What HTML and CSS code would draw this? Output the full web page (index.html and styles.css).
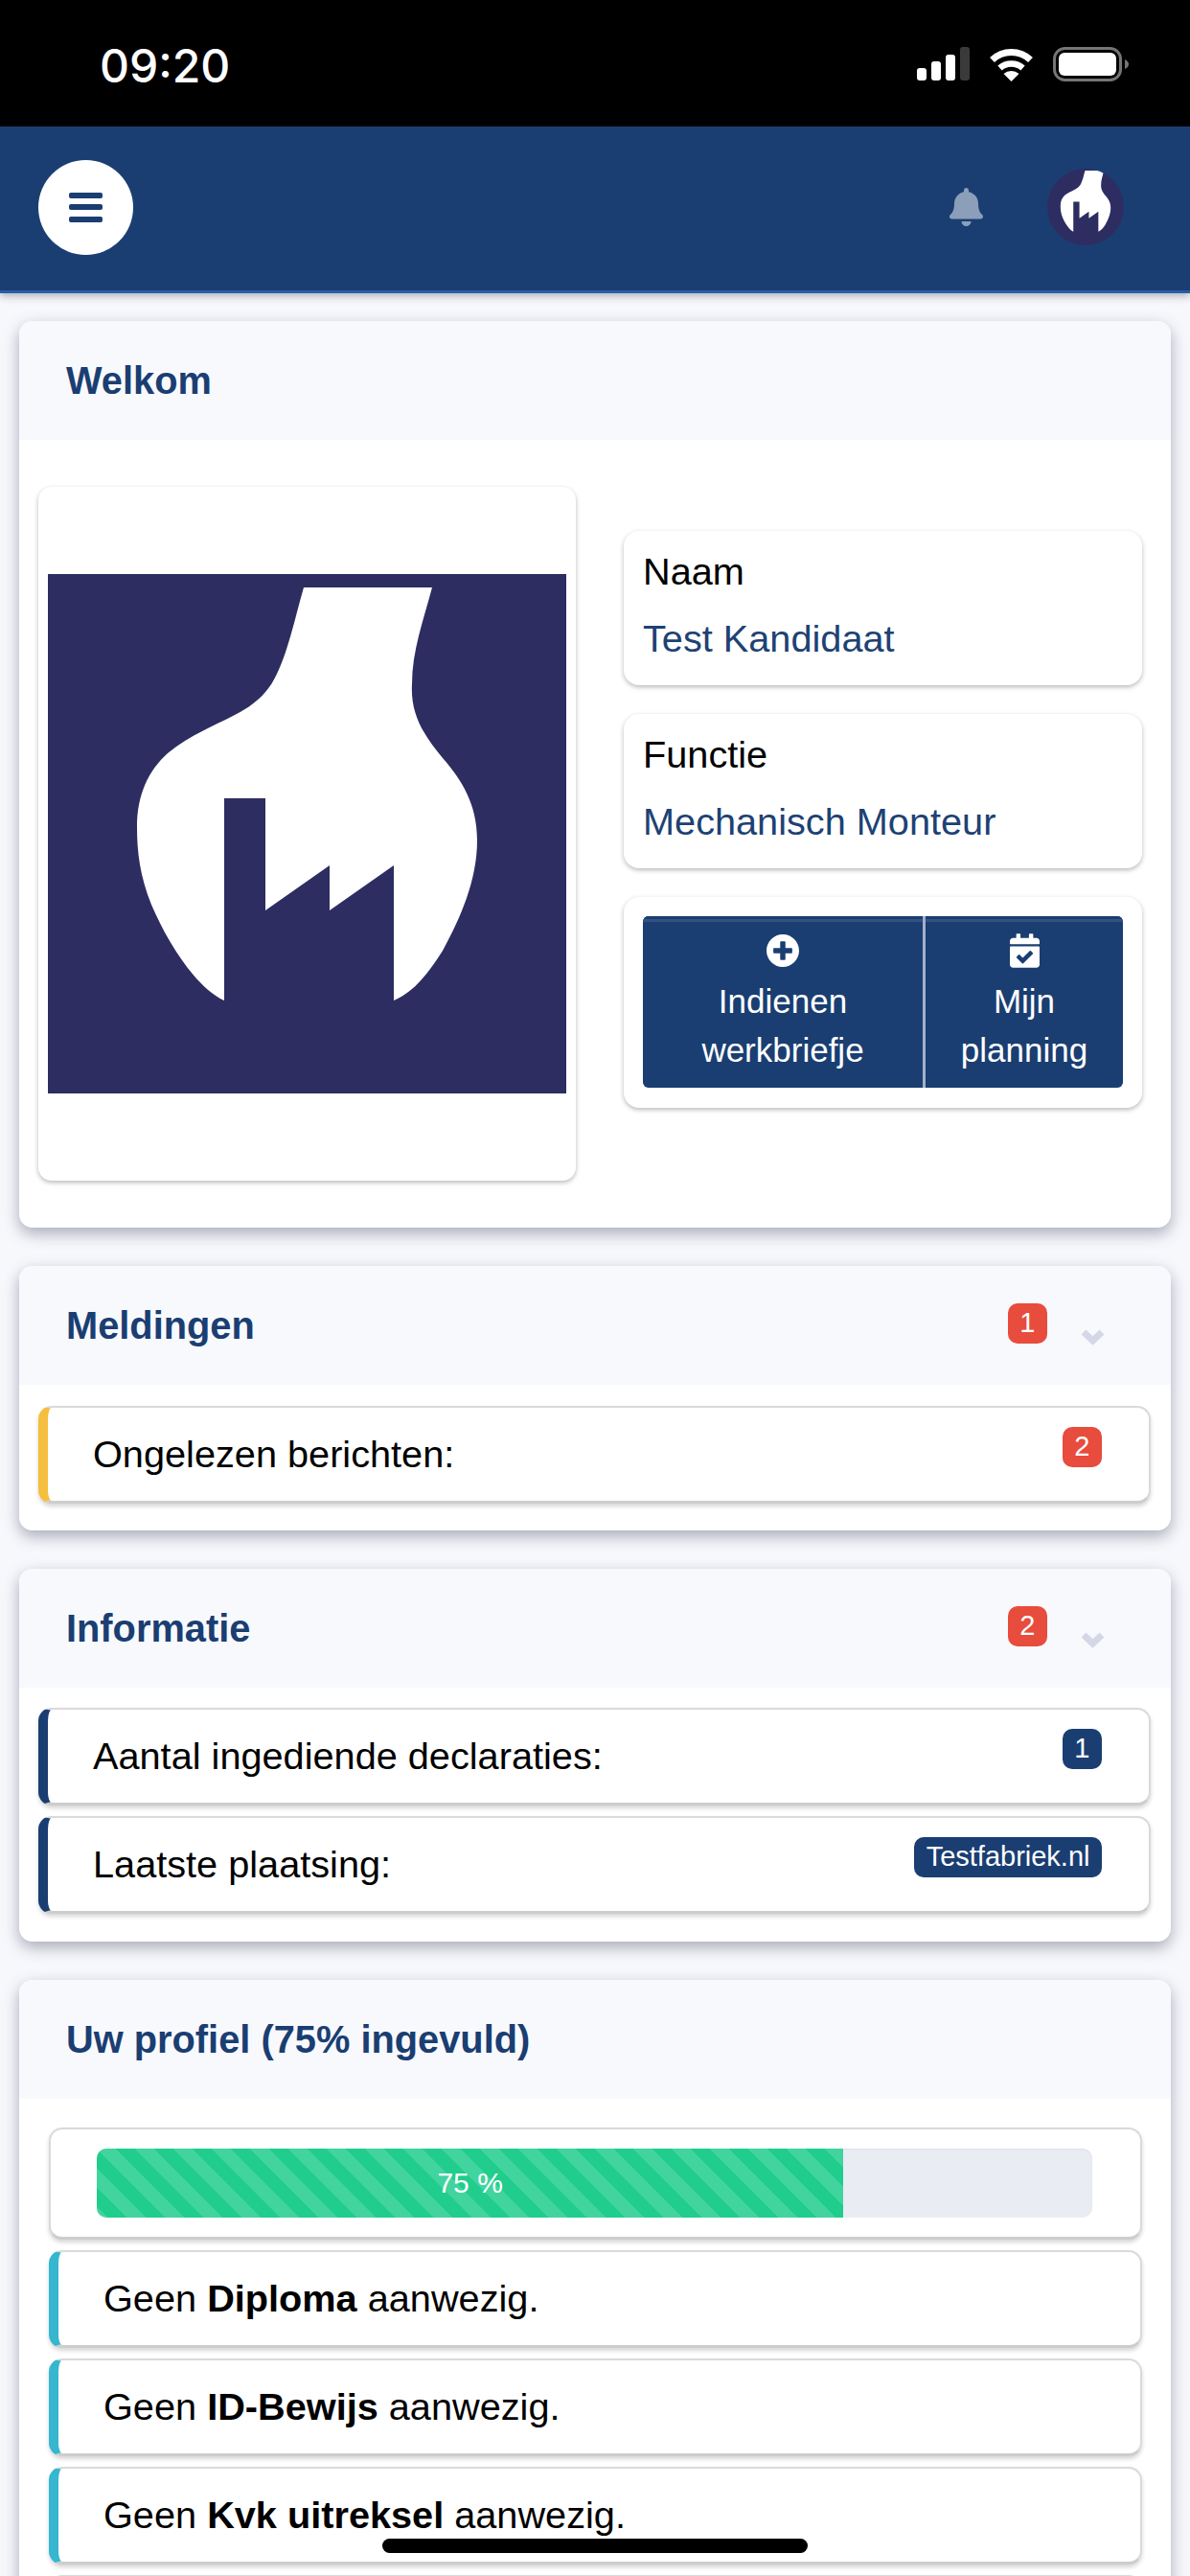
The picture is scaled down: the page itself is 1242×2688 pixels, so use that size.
FILE: index.html
```html
<!DOCTYPE html>
<html lang="nl">
<head>
    <meta charset="UTF-8">
    <meta name="viewport" content="width=device-width, initial-scale=1.0">
    <title>Welkom</title>
    <link rel="stylesheet" href="styles.css">
</head>
<body>

    <svg class="defs" width="0" height="0">
        <symbol id="logo" viewBox="0 0 541 542">
            <rect width="541" height="542" fill="#2e2d62"/>
            <path fill="#fff" d="M267 14H401C392 48 380 80 380 115C378 150 396 172 412 192C432 215 448 240 448 278C448 320 430 360 412 393C395 420 380 437 361 445V304L294 351V304L227 351V234H184V445C155 432 125 385 108 345C96 315 93 290 93 264C93 230 105 205 125 187C145 170 170 160 195 147C215 137 228 125 236 110C250 85 258 45 267 14Z"/>
        </symbol>
    </svg>

    <div class="status-bar">
        <span class="time">09:20</span>
        <div class="status-icons">
            <svg width="55" height="35" viewBox="0 0 55 35">
                <rect x="0" y="22" width="10" height="13" rx="3" fill="#fff"/>
                <rect x="15" y="15" width="10" height="20" rx="3" fill="#fff"/>
                <rect x="30" y="8" width="10" height="27" rx="3" fill="#fff"/>
                <rect x="45" y="0" width="10" height="35" rx="3" fill="#3a3a3a"/>
            </svg>
            <svg width="47" height="36" viewBox="0 0 47 36">
                <path d="M3.5 13.5A29 29 0 0 1 43.5 13.5" fill="none" stroke="#fff" stroke-width="7"/>
                <path d="M11.5 22A18 18 0 0 1 35.5 22" fill="none" stroke="#fff" stroke-width="6.5"/>
                <path d="M23.5 36L15.5 28A12 12 0 0 1 31.5 28Z" fill="#fff"/>
            </svg>
            <svg width="79" height="36" viewBox="0 0 79 36">
                <rect x="1.5" y="1.5" width="69" height="33" rx="11" fill="none" stroke="#757575" stroke-width="3"/>
                <rect x="6" y="6" width="60" height="24" rx="6" fill="#fff"/>
                <path d="M75 13C77.500 14 79 16 79 18C79 20 77.500 22 75 23Z" fill="#757575"/>
            </svg>
        </div>
    </div>

    <header class="topbar">
        <button class="menu-btn"><span></span><span></span><span></span></button>
        <div class="topbar-right">
            <svg class="bell" viewBox="0 0 448 512"><path d="M224 512c35.32 0 63.97-28.65 63.97-64H160.03c0 35.35 28.65 64 63.97 64zm215.39-149.71c-19.32-20.76-55.47-51.99-55.47-154.29 0-77.7-54.48-139.9-127.94-155.16V32c0-17.67-14.32-32-31.98-32s-31.98 14.33-31.98 32v20.84C118.56 68.1 64.08 130.3 64.08 208c0 102.3-36.15 133.53-55.47 154.29-6 6.45-8.66 14.16-8.61 21.71.11 16.4 12.98 32 32.1 32h383.8c19.12 0 32-15.6 32.1-32 .05-7.55-2.61-15.27-8.61-21.71z"/></svg>
            <svg class="avatar"><use href="#logo"/></svg>
        </div>
    </header>

    <main class="content">

        <section class="card">
            <div class="card-header"><h2>Welkom</h2></div>
            <div class="welcome">
                <div class="logo-card">
                    <svg class="logo"><use href="#logo"/></svg>
                </div>
                <div class="welcome-side">
                    <div class="info-card">
                        <span>Naam</span>
                        <span class="info-value">Test Kandidaat</span>
                    </div>
                    <div class="info-card">
                        <span>Functie</span>
                        <span class="info-value">Mechanisch Monteur</span>
                    </div>
                    <div class="actions-card">
                        <div class="actions">
                            <a class="action action-wide">
                                <svg class="icon-plus" viewBox="8 8 496 496"><path d="M256 8C119 8 8 119 8 256s111 248 248 248 248-111 248-248S393 8 256 8zm144 276c0 6.6-5.400 12-12 12h-92v92c0 6.600-5.400 12-12 12h-56c-6.600 0-12-5.400-12-12v-92h-92c-6.600 0-12-5.400-12-12v-56c0-6.600 5.400-12 12-12h92v-92c0-6.600 5.400-12 12-12h56c6.600 0 12 5.400 12 12v92h92c6.600 0 12 5.400 12 12v56z"/></svg>
                                <span>Indienen<br>werkbriefje</span>
                            </a>
                            <a class="action">
                                <svg class="icon-calendar" viewBox="0 0 448 512"><path d="M436 160H12c-6.627 0-12-5.373-12-12v-36c0-26.510 21.490-48 48-48h48V12c0-6.627 5.373-12 12-12h40c6.627 0 12 5.373 12 12v52h128V12c0-6.627 5.373-12 12-12h40c6.627 0 12 5.373 12 12v52h48c26.510 0 48 21.490 48 48v36c0 6.627-5.373 12-12 12zM12 192h424c6.627 0 12 5.373 12 12v260c0 26.510-21.490 48-48 48H48c-26.510 0-48-21.490-48-48V204c0-6.627 5.373-12 12-12zm333.296 95.947l-28.169-28.398c-4.667-4.705-12.265-4.736-16.970-.068L194.120 364.665l-45.980-46.352c-4.667-4.705-12.266-4.736-16.971-.068l-28.397 28.170c-4.705 4.667-4.736 12.265-.068 16.970l82.601 83.269c4.667 4.705 12.265 4.736 16.970.068l142.953-141.805c4.705-4.667 4.736-12.265.068-16.970z"/></svg>
                                <span>Mijn<br>planning</span>
                            </a>
                        </div>
                    </div>
                </div>
            </div>
        </section>

        <section class="card">
            <div class="card-header">
                <h2>Meldingen</h2>
                <span class="badge badge-red header-badge">1</span>
                <svg class="chevron" viewBox="0 0 25 17"><path d="M3 3L12.500 12L22 3" fill="none" stroke="#d5d7e6" stroke-width="7"/></svg>
            </div>
            <div class="card-rows rows-single">
                <div class="row row-yellow">
                    <span>Ongelezen berichten:</span>
                    <span class="badge badge-red">2</span>
                </div>
            </div>
        </section>

        <section class="card">
            <div class="card-header">
                <h2>Informatie</h2>
                <span class="badge badge-red header-badge">2</span>
                <svg class="chevron" viewBox="0 0 25 17"><path d="M3 3L12.500 12L22 3" fill="none" stroke="#d5d7e6" stroke-width="7"/></svg>
            </div>
            <div class="card-rows">
                <div class="row row-navy">
                    <span>Aantal ingediende declaraties:</span>
                    <span class="badge badge-navy">1</span>
                </div>
                <div class="row row-navy">
                    <span>Laatste plaatsing:</span>
                    <span class="badge badge-navy">Testfabriek.nl</span>
                </div>
            </div>
        </section>

        <section class="card">
            <div class="card-header"><h2>Uw profiel (75% ingevuld)</h2></div>
            <div class="card-rows rows-profile">
                <div class="row progress-row">
                    <div class="progress">
                        <div class="progress-fill" style="width: 75%">75 %</div>
                    </div>
                </div>
                <div class="row row-teal"><span>Geen <b>Diploma</b> aanwezig.</span></div>
                <div class="row row-teal"><span>Geen <b>ID-Bewijs</b> aanwezig.</span></div>
                <div class="row row-teal"><span>Geen <b>Kvk uitreksel</b> aanwezig.</span></div>
                <div class="row row-teal"></div>
            </div>
        </section>

    </main>

    <div class="home-indicator"></div>

</body>
</html>
```

FILE: styles.css
```css
* {
    box-sizing: border-box;
}

html, body {
    margin: 0;
    height: 2688px;
    overflow: hidden;
}

body {
    position: relative;
    width: 1242px;
    font-family: 'Liberation Sans', Arial, sans-serif;
    font-size: 39.7px;
    color: #000;
    background: #f7f8fc;
}

.defs {
    position: absolute;
}

/* Status bar */
.status-bar {
    height: 132px;
    background: #000;
    display: flex;
    justify-content: space-between;
    padding: 49px 64px 0 104px;
}

.time {
    font-family: Inter, sans-serif;
    font-size: 48px;
    font-weight: 500;
    line-height: 39px;
    color: #fff;
}

.status-icons {
    display: flex;
    align-items: flex-start;
    gap: 20px;
}

/* Top bar */
.topbar {
    height: 174px;
    background: #1a3e72;
    border-bottom: 3px solid #2a5da6;
    box-shadow: 0 3px 8px rgba(40, 50, 70, 0.35);
    display: flex;
    justify-content: space-between;
    align-items: center;
    padding: 0 69px 3px 40px;
}

.menu-btn {
    width: 99px;
    height: 99px;
    padding: 0;
    border: 0;
    border-radius: 50%;
    background: #fff;
    display: flex;
    flex-direction: column;
    justify-content: center;
    align-items: center;
    gap: 6.5px;
}

.menu-btn span {
    width: 35px;
    height: 6px;
    border-radius: 2px;
    background: #1a3e72;
}

.topbar-right {
    display: flex;
    align-items: center;
    gap: 67px;
}

.bell {
    width: 35px;
    height: 40px;
    fill: #8b9fbb;
}

.avatar {
    width: 80px;
    height: 80px;
    border-radius: 50%;
    display: block;
}

/* Cards */
.content {
    padding: 29px 20px 0;
    display: flex;
    flex-direction: column;
    gap: 40px;
}

.card {
    background: #fff;
    border-radius: 14px;
    box-shadow: 0 6px 16px rgba(50, 55, 80, 0.4);
}

.card-header {
    height: 124px;
    background: #f8f9fd;
    border-radius: 14px 14px 0 0;
    display: flex;
    align-items: flex-start;
    padding: 0 69px 0 49px;
}

.card-header h2 {
    margin: 0 auto 0 0;
    font-size: 39.8px;
    line-height: 124px;
    font-weight: bold;
    color: #1a3e72;
}

.header-badge {
    margin-top: 39px;
}

.chevron {
    width: 25px;
    height: 17px;
    margin: 66px 0 0 35px;
}

.badge {
    min-width: 41px;
    height: 42px;
    padding: 0 12.5px;
    border-radius: 10px;
    font-size: 29px;
    line-height: 40px;
    text-align: center;
    color: #fff;
}

.badge-red {
    background: #e74c3c;
}

.badge-navy {
    background: #1a3e72;
}

/* Welkom */
.welcome {
    display: grid;
    grid-template-columns: 561px 541px;
    column-gap: 50px;
    padding: 49px 30px 49px 20px;
}

.logo-card {
    padding: 91px 10px;
    background: #fff;
    border-radius: 14px;
    box-shadow: 0 2px 5px rgba(0, 0, 0, 0.28);
}

.logo {
    display: block;
    width: 541px;
    height: 542px;
}

.welcome-side {
    margin-top: 46px;
    display: flex;
    flex-direction: column;
    gap: 30px;
}

.info-card {
    padding: 18px 20px 25px;
    background: #fff;
    border-radius: 16px;
    box-shadow: 0 2px 5px rgba(0, 0, 0, 0.28);
    display: flex;
    flex-direction: column;
    gap: 22px;
    line-height: 48px;
}

.info-value {
    color: #1d4273;
}

.actions-card {
    padding: 20px 20px 21px;
    background: #fff;
    border-radius: 16px;
    box-shadow: 0 2px 5px rgba(0, 0, 0, 0.28);
}

.actions {
    height: 179px;
    display: flex;
    gap: 3px;
    border-radius: 6px;
    overflow: hidden;
    background: #a3b1c6;
}

.action {
    width: 206px;
    background: #1a3e72;
    box-shadow: inset 0 3px 0 #1a3e72, inset 0 6px 0 #33537f;
    color: #fff;
    font-size: 35px;
    line-height: 51px;
    text-align: center;
    display: flex;
    flex-direction: column;
    align-items: center;
    padding-top: 18px;
}

.action-wide {
    width: 292px;
}

.action span {
    display: block;
    margin-top: 9px;
}

.icon-plus {
    width: 34px;
    height: 34px;
    margin: 1px 0;
    fill: #fff;
}

.icon-calendar {
    width: 31px;
    height: 36px;
    fill: #fff;
}

/* Rows */
.card-rows {
    padding: 21px 21px 29px 20px;
    display: flex;
    flex-direction: column;
    gap: 11px;
}

.rows-single {
    padding-top: 22px;
    padding-bottom: 28px;
}

.rows-profile {
    padding: 30px 30px 0 31px;
}

.row {
    min-height: 102px;
    flex-shrink: 0;
    display: flex;
    justify-content: space-between;
    align-items: center;
    padding: 0 49px 0 47px;
    background: #fff;
    border: 2px solid #dadada;
    border-bottom: 3px solid #cdcdcd;
    border-radius: 14px;
    box-shadow: 0 3px 4px rgba(0, 0, 0, 0.16);
}

.row .badge {
    align-self: flex-start;
    margin-top: 20px;
}

.row-yellow {
    border-left: 10px solid #f5be3e;
}

.row-navy {
    border-left: 10px solid #1a3e72;
}

.row-teal {
    border-left: 10px solid #36b6cf;
}

.progress-row {
    min-height: 117px;
    padding: 0 50px 0 48px;
}

.progress {
    width: 100%;
    height: 72px;
    background: #eaecf4;
    border-radius: 10px;
    box-shadow: inset 0 1px 2px rgba(0, 0, 0, 0.06);
    overflow: hidden;
}

.progress-fill {
    height: 72px;
    background-color: #20cd8d;
    background-image: linear-gradient(45deg, rgba(255, 255, 255, 0.15) 25%, transparent 25%, transparent 50%, rgba(255, 255, 255, 0.15) 50%, rgba(255, 255, 255, 0.15) 75%, transparent 75%, transparent);
    background-size: 40px 40px;
    color: #fff;
    font-size: 30px;
    line-height: 72px;
    text-align: center;
}

.home-indicator {
    position: absolute;
    left: 399px;
    top: 2649px;
    width: 444px;
    height: 15px;
    border-radius: 8px;
    background: #000;
}
```
